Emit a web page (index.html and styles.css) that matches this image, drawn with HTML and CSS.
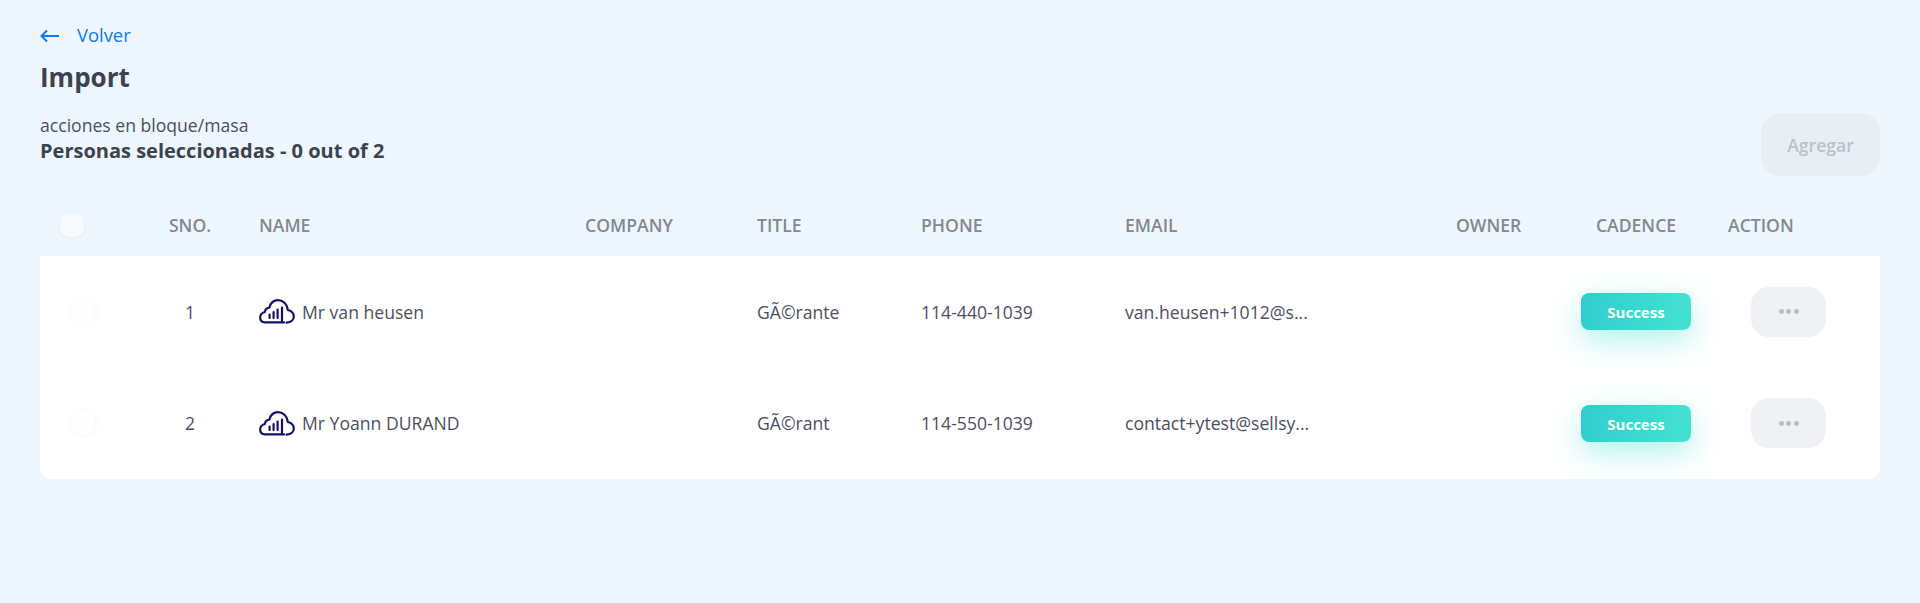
FILE: index.html
```html
<!DOCTYPE html>
<html lang="es">
<head>
  <meta charset="UTF-8">
  <meta name="viewport" content="width=device-width, initial-scale=1.0">
  <title>Import</title>
  <link rel="stylesheet" href="styles.css">
</head>

<body>
  <a class="back-link" href="#">
    <svg class="back-icon" viewBox="0 0 20 14" width="20" height="14" fill="none" stroke="#0a7cff" stroke-width="2">
      <path d="M1 7H19"/>
      <path d="M7 1.5L1.5 7L7 12.5"/>
    </svg>
    <span>Volver</span>
  </a>
  <h1 class="page-title">Import</h1>

  <div class="bulk-row">
    <div>
      <div class="bulk-label">acciones en bloque/masa</div>
      <div class="bulk-count">Personas seleccionadas - 0 out of 2</div>
    </div>
    <button class="add-button" disabled>Agregar</button>
  </div>

  <table class="people-table">
    <colgroup>
      <col class="col-check"><col class="col-sno"><col class="col-name"><col class="col-company">
      <col class="col-title"><col class="col-phone"><col class="col-email"><col class="col-owner">
      <col class="col-cadence"><col class="col-action">
    </colgroup>
    <thead>
      <tr>
        <th class="check-head"><span class="check-box"></span></th>
        <th class="center">SNO.</th>
        <th>NAME</th>
        <th>COMPANY</th>
        <th>TITLE</th>
        <th>PHONE</th>
        <th>EMAIL</th>
        <th>OWNER</th>
        <th class="center">CADENCE</th>
        <th class="action-head">ACTION</th>
      </tr>
    </thead>
    <tbody>
      <tr>
        <td class="check-cell"><span class="check-box"></span></td>
        <td class="center">1</td>
        <td>
          <div class="name-cell">
            <svg class="cloud-icon" viewBox="0 0 36 25" width="36" height="25" fill="none" stroke="#14106e" stroke-width="2.2" stroke-linecap="round" stroke-linejoin="round">
              <path d="M25 23.4H6C3 23.4 1.2 21.4 1.2 18.6C1.2 15.8 3 13.8 5.6 13.2C6.2 10.4 8 8.8 10.4 8.6C11.6 4 15 1.2 19 1.2C24 1.2 28 5 28.6 10"/>
              <path d="M28.8 11C32.4 11.8 34.8 14.4 34.8 17.6C34.8 20.8 32 23.4 27.6 23.6"/>
              <path d="M23 8.5V23"/>
              <path d="M18.6 10.5V19M14.6 13V19M10.6 15.5V19"/>
            </svg>
            <span>Mr van heusen</span>
          </div>
        </td>
        <td></td>
        <td>GÃ©rante</td>
        <td>114-440-1039</td>
        <td>van.heusen+1012@s...</td>
        <td></td>
        <td class="center"><span class="status-badge">Success</span></td>
        <td class="action-cell"><button class="more-button"><span></span><span></span><span></span></button></td>
      </tr>
      <tr>
        <td class="check-cell"><span class="check-box"></span></td>
        <td class="center">2</td>
        <td>
          <div class="name-cell">
            <svg class="cloud-icon" viewBox="0 0 36 25" width="36" height="25" fill="none" stroke="#14106e" stroke-width="2.2" stroke-linecap="round" stroke-linejoin="round">
              <path d="M25 23.4H6C3 23.4 1.2 21.4 1.2 18.6C1.2 15.8 3 13.8 5.6 13.2C6.2 10.4 8 8.8 10.4 8.6C11.6 4 15 1.2 19 1.2C24 1.2 28 5 28.6 10"/>
              <path d="M28.8 11C32.4 11.8 34.8 14.4 34.8 17.6C34.8 20.8 32 23.4 27.6 23.6"/>
              <path d="M23 8.5V23"/>
              <path d="M18.6 10.5V19M14.6 13V19M10.6 15.5V19"/>
            </svg>
            <span>Mr Yoann DURAND</span>
          </div>
        </td>
        <td></td>
        <td>GÃ©rant</td>
        <td>114-550-1039</td>
        <td>contact+ytest@sellsy...</td>
        <td></td>
        <td class="center"><span class="status-badge">Success</span></td>
        <td class="action-cell"><button class="more-button"><span></span><span></span><span></span></button></td>
      </tr>
    </tbody>
  </table>
</body>
</html>
```

FILE: styles.css
```css
body {
  margin: 0;
  padding: 24px 40px 0;
  min-height: 603px;
  box-sizing: border-box;
  background-color: #eef6fe;
  color: #3c4350;
  font-family: "Open Sans", "Liberation Sans", sans-serif;
  font-size: 17.6px;
  overflow: hidden;
}
.back-link {
  display: flex;
  align-items: center;
  gap: 17px;
  height: 24px;
  color: #0a7cff;
  font-size: 18.4px;
  line-height: 22px;
  text-decoration: none;
}
.back-link span {
  margin-bottom: 2px;
}
.back-icon {
  display: block;
}
.page-title {
  margin: 13px 0 0;
  font-size: 26px;
  line-height: 32px;
  font-weight: 700;
  color: #3c4350;
}
.bulk-row {
  display: flex;
  justify-content: space-between;
  align-items: flex-start;
  margin-top: 20px;
}
.bulk-label {
  line-height: 24px;
  color: #4a5060;
}
.bulk-count {
  line-height: 28px;
  font-size: 20px;
  font-weight: 700;
}
.add-button {
  width: 119px;
  height: 63px;
  border: 0;
  border-radius: 20px;
  background-color: #e9eef3;
  color: #b7c2cf;
  font-family: inherit;
  font-size: 17.6px;
  font-weight: 600;
}
.people-table {
  width: 1840px;
  margin-top: 18px;
  border-collapse: separate;
  border-spacing: 0;
  table-layout: fixed;
}
.col-check { width: 97px; }
.col-sno { width: 106px; }
.col-name { width: 326px; }
.col-company { width: 172px; }
.col-title { width: 164px; }
.col-phone { width: 204px; }
.col-email { width: 331px; }
.col-owner { width: 134px; }
.col-cadence { width: 124px; }
.col-action { width: 182px; }
th, td {
  padding: 0 0 0 16px;
  text-align: left;
}
th {
  height: 62px;
  color: #84888f;
  font-weight: 600;
}
td {
  height: 111.5px;
  background-color: #fff;
  color: #4a5060;
}
th.center, td.center {
  padding: 0;
  text-align: center;
}
tbody tr:last-child td:first-child {
  border-bottom-left-radius: 12px;
}
tbody tr:last-child td:last-child {
  border-bottom-right-radius: 12px;
}
.check-box {
  display: block;
  width: 24px;
  height: 24px;
  border-radius: 9px;
  background-color: #fefefe;
  box-shadow: 0 0 4px rgba(120, 130, 150, 0.1);
}
th .check-box {
  background-color: #f8fbfe;
}
.check-head {
  padding-left: 20px;
}
.check-cell {
  padding-left: 31px;
}
.name-cell {
  display: flex;
  align-items: center;
  gap: 7px;
}
.cloud-icon {
  display: block;
  flex: none;
}
.status-badge {
  display: inline-block;
  width: 110px;
  height: 37px;
  border-radius: 8px;
  background: linear-gradient(100deg, #30cdcf, #43e3d2);
  box-shadow: 0 10px 30px rgba(64, 224, 208, 0.42);
  color: #fff;
  font-size: 15px;
  font-weight: 700;
  line-height: 39px;
  vertical-align: middle;
}
.action-head {
  padding-left: 30px;
}
.action-cell {
  padding-left: 53px;
}
.more-button {
  display: flex;
  align-items: center;
  justify-content: center;
  gap: 2.5px;
  width: 75px;
  height: 50px;
  padding: 0;
  border: 0;
  border-radius: 18px;
  background-color: #f0f1f4;
}
.more-button span {
  width: 5px;
  height: 5px;
  border-radius: 50%;
  background-color: #b8bfcc;
}
```
